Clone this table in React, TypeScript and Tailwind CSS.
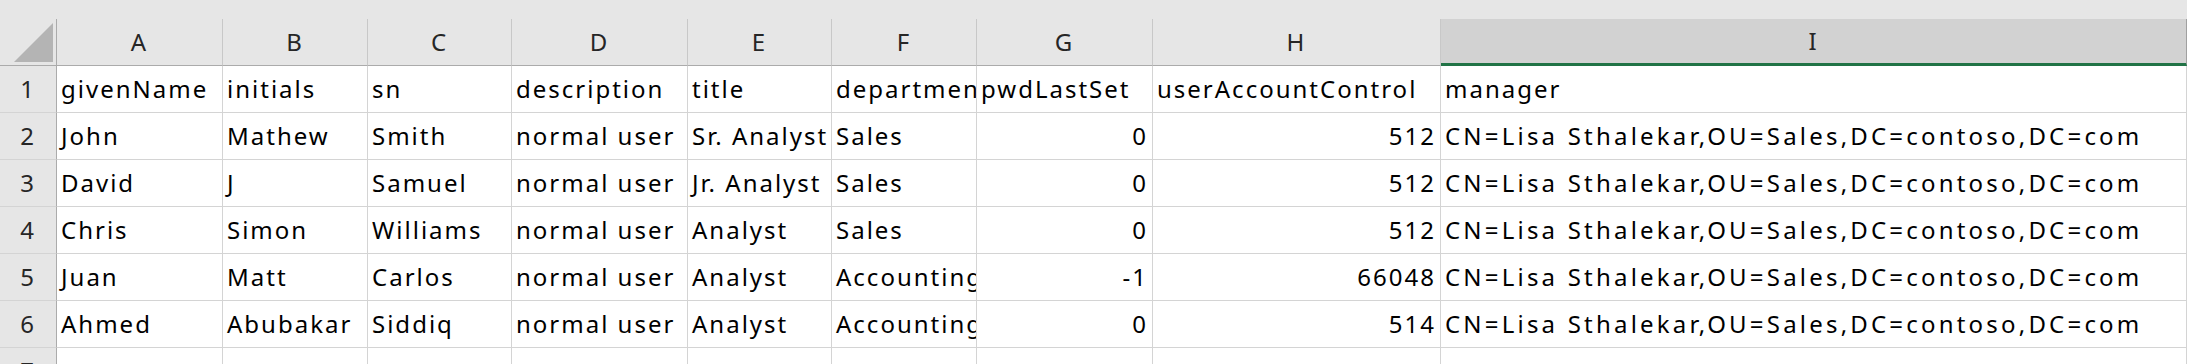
import React from "react";

const COLS = [
  { key: "A", w: "w-[166px]" },
  { key: "B", w: "w-[145px]" },
  { key: "C", w: "w-[144px]" },
  { key: "D", w: "w-[176px]" },
  { key: "E", w: "w-[144px]" },
  { key: "F", w: "w-[145px]" },
  { key: "G", w: "w-[176px]" },
  { key: "H", w: "w-[288px]" },
  { key: "I", w: "w-[746px]" },
];

const MGR = "CN=Lisa Sthalekar,OU=Sales,DC=contoso,DC=com";

type Cell = string | number | null;

const ROWS: Cell[][] = [
  ["givenName", "initials", "sn", "description", "title", "department", "pwdLastSet", "userAccountControl", "manager"],
  ["John", "Mathew", "Smith", "normal user", "Sr. Analyst", "Sales", 0, 512, MGR],
  ["David", "J", "Samuel", "normal user", "Jr. Analyst", "Sales", 0, 512, MGR],
  ["Chris", "Simon", "Williams", "normal user", "Analyst", "Sales", 0, 512, MGR],
  ["Juan", "Matt", "Carlos", "normal user", "Analyst", "Accounting", -1, 66048, MGR],
  ["Ahmed", "Abubakar", "Siddiq", "normal user", "Analyst", "Accounting", 0, 514, MGR],
  [null, null, null, null, null, null, null, null, null],
];

export default function App() {
  return (
    <div
      className="w-[2187px] h-[364px] overflow-hidden bg-white text-[24px] tracking-[2px] text-black"
      style={{ fontFamily: '"Noto Sans", "Noto Sans CJK JP", sans-serif' }}
    >
      {/* top strip */}
      <div className="h-[19px] bg-[#e6e6e6]" />
      {/* column header row */}
      <div className="flex h-[47px]">
        <div className="w-[57px] h-full bg-[#e6e6e6] border-r border-b border-[#ababab] relative">
          <svg className="absolute left-0 top-0" width="57" height="47" viewBox="0 0 57 47">
            <polygon points="53,4 53,43 14,43" fill="#b4b4b4" />
          </svg>
        </div>
        {COLS.map((c) =>
          c.key === "I" ? (
            <div
              key={c.key}
              className={`${c.w} h-full bg-[#d2d2d2] border-b-[3px] border-b-[#217346] border-r border-r-[#a0a0a0] flex items-center justify-center text-[#262626]`}
            >
              {c.key}
            </div>
          ) : (
            <div
              key={c.key}
              className={`${c.w} h-full bg-[#e6e6e6] border-r border-r-[#c8c8c8] border-b border-b-[#ababab] flex items-center justify-center text-[#262626]`}
            >
              {c.key}
            </div>
          )
        )}
      </div>
      {ROWS.map((row, ri) => (
        <div key={ri} className="flex h-[47px]">
          <div className="w-[57px] h-full shrink-0 bg-[#e6e6e6] border-r border-r-[#ababab] border-b border-b-[#d4d4d4] flex items-center justify-center text-[#262626]">
            {ri + 1}
          </div>
          {row.map((v, ci) => {
            const num = typeof v === "number";
            const wide = ci === 8 && ri > 0;
            return (
              <div
                key={ci}
                className={`${COLS[ci].w} h-full shrink-0 border-r border-b border-[#d4d4d4] flex items-center overflow-hidden whitespace-nowrap ${
                  num ? "justify-end pr-[4px] tracking-[2px]" : "justify-start pl-[4px]"
                } ${wide ? "tracking-[3.2px]" : ""}`}
              >
                {v === null ? "" : String(v)}
              </div>
            );
          })}
        </div>
      ))}
    </div>
  );
}
